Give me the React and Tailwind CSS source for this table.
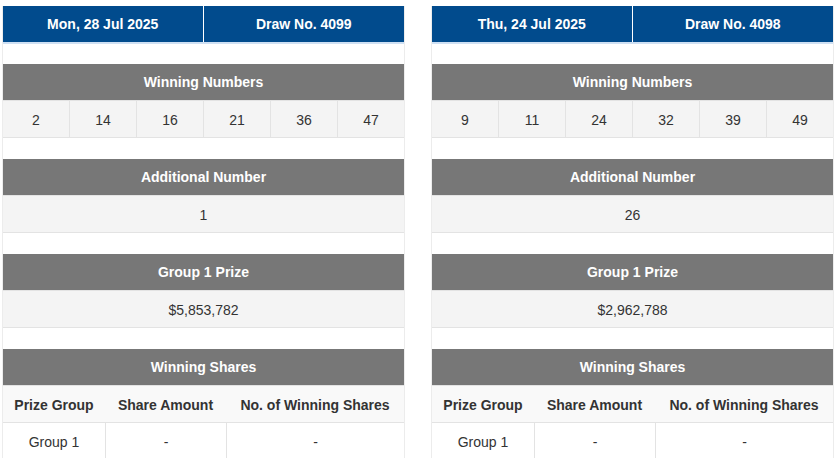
const draws = [
  {
    date: "Mon, 28 Jul 2025",
    draw: "Draw No. 4099",
    numbers: [2, 14, 16, 21, 36, 47],
    additional: "1",
    prize: "$5,853,782",
  },
  {
    date: "Thu, 24 Jul 2025",
    draw: "Draw No. 4098",
    numbers: [9, 11, 24, 32, 39, 49],
    additional: "26",
    prize: "$2,962,788",
  },
];

function SectionHead({ children }) {
  return (
    <div className="h-[36px] bg-[#777777] flex items-center justify-center text-white font-bold text-[14px]">
      {children}
    </div>
  );
}

function Gap({ h = "h-[21px]" }) {
  return <div className={h}></div>;
}

function DrawCard({ d }) {
  return (
    <div className="w-[403px] border-x border-[#ececec] bg-white">
      {/* draw header */}
      <div className="flex h-[38px] bg-[#014b8d] border-b-2 border-[#cfe0f3] text-white font-bold text-[14px]">
        <div className="w-1/2 flex items-center justify-center border-r border-white">{d.date}</div>
        <div className="w-1/2 flex items-center justify-center">{d.draw}</div>
      </div>
      <Gap h="h-[20px]" />

      {/* winning numbers */}
      <SectionHead>Winning Numbers</SectionHead>
      <div className="flex h-[38px] bg-[#f4f4f4] border-t border-b border-[#e3e3e3]">
        {d.numbers.map((n, i) => (
          <div
            key={i}
            className={`flex-1 flex items-center justify-center pt-[2px] ${i > 0 ? "border-l border-[#e3e3e3]" : ""}`}
          >
            {n}
          </div>
        ))}
      </div>
      <Gap />

      {/* additional number */}
      <SectionHead>Additional Number</SectionHead>
      <div className="flex h-[38px] pt-[2px] items-center justify-center bg-[#f4f4f4] border-t border-b border-[#e3e3e3]">
        {d.additional}
      </div>
      <Gap />

      {/* group 1 prize */}
      <SectionHead>Group 1 Prize</SectionHead>
      <div className="flex h-[38px] pt-[2px] items-center justify-center bg-[#f4f4f4] border-t border-b border-[#e3e3e3]">
        {d.prize}
      </div>
      <Gap />

      {/* winning shares */}
      <SectionHead>Winning Shares</SectionHead>
      <div className="flex h-[38px] pt-[2px] bg-[#f9f9f9] border-t border-b border-[#e3e3e3] font-bold">
        <div className="w-[102px] flex items-center justify-center">Prize Group</div>
        <div className="w-[121px] flex items-center justify-center">Share Amount</div>
        <div className="flex-1 flex items-center justify-center">No. of Winning Shares</div>
      </div>
      <div className="flex h-[38px] bg-white border-b border-[#e3e3e3]">
        <div className="w-[102px] flex items-center justify-center pt-[2px]">Group 1</div>
        <div className="w-[121px] flex items-center justify-center pt-[2px] border-l border-[#e3e3e3]">-</div>
        <div className="flex-1 flex items-center justify-center pt-[2px] border-l border-[#e3e3e3]">-</div>
      </div>
    </div>
  );
}

export default function App() {
  return (
    <div
      className="w-[837px] h-[458px] overflow-hidden bg-white pt-[6px] pl-[2px] flex gap-[26px] text-[14px] text-[#333333]"
      style={{ fontFamily: '"Liberation Sans", Arial, sans-serif' }}
    >
      {draws.map((d) => (
        <DrawCard key={d.draw} d={d} />
      ))}
    </div>
  );
}
